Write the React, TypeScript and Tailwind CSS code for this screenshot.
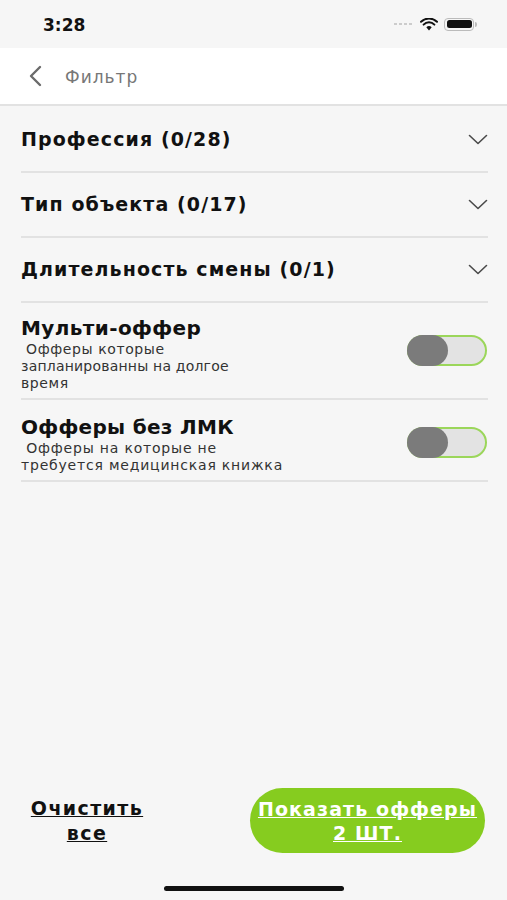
import React from "react";

const Chevron = () => (
  <svg width="20" height="12" viewBox="0 0 20 12" fill="none">
    <path d="M1.5 1.5 L10 9.5 L18.5 1.5" stroke="#4a4a4a" strokeWidth="1.6" strokeLinecap="round" strokeLinejoin="round" />
  </svg>
);

const Toggle = () => (
  <div className="relative w-[80px] h-[31px] rounded-full bg-[#e3e3e3] border-2 border-[#9bd65a] shrink-0">
    <div className="absolute left-[-2px] top-[-2px] w-[41px] h-[31px] rounded-full bg-[#7b7b7b]" />
  </div>
);

const Row = ({ title }: { title: string }) => (
  <div className="flex items-center justify-between h-[65px] border-b-2 border-[#e2e2e2]">
    <span className="text-[19px] font-bold text-[#111] tracking-[1.1px]">{title}</span>
    <Chevron />
  </div>
);

export default function App() {
  return (
    <div className="w-[507px] h-[900px] bg-[#f6f6f6] flex flex-col" style={{ fontFamily: '"DejaVu Sans", "Liberation Sans", sans-serif' }}>
      <div className="h-[48px] flex items-center justify-between pl-[43px] pr-[30px]">
        <span className="text-[17px] font-bold text-[#111] pt-[3px]">3:28</span>
        <div className="flex items-center gap-[6px]">
          <div className="flex gap-[2px] mr-[2px]">
            <div className="w-[3px] h-[2px] bg-[#ccc]" />
            <div className="w-[3px] h-[2px] bg-[#ccc]" />
            <div className="w-[3px] h-[2px] bg-[#ccc]" />
            <div className="w-[3px] h-[2px] bg-[#ccc]" />
          </div>
          <svg width="18" height="13" viewBox="0 0 18 13">
            <path d="M9 12.5 L6.3 9.3 A4 4 0 0 1 11.7 9.3 Z" fill="#111" />
            <path d="M3.6 6.6 A7.6 7.6 0 0 1 14.4 6.6" stroke="#111" strokeWidth="2" fill="none" strokeLinecap="round" />
            <path d="M1 3.8 A11.5 11.5 0 0 1 17 3.8" stroke="#111" strokeWidth="2" fill="none" strokeLinecap="round" />
          </svg>
          <div className="flex items-center">
            <div className="w-[30px] h-[13px] rounded-[4px] border border-[#bbb] p-[1.5px]">
              <div className="w-full h-full rounded-[2.5px] bg-[#111]" />
            </div>
            <div className="w-[2px] h-[5px] bg-[#bbb] rounded-r-sm ml-[1px]" />
          </div>
        </div>
      </div>
      <div className="h-[58px] bg-white border-b-2 border-[#e2e2e2] flex items-center pl-[28px]">
        <svg width="14" height="22" viewBox="0 0 14 22" fill="none">
          <path d="M12 2 L3 11 L12 20" stroke="#6b6b6b" strokeWidth="2.4" strokeLinecap="round" strokeLinejoin="round" />
        </svg>
        <span className="ml-[23px] text-[17px] text-[#777] pt-[3px] tracking-[1px]">Фильтр</span>
      </div>
      <div className="pl-[21px] pr-[19px] pt-[2px]">
        <Row title="Профессия (0/28)" />
        <Row title="Тип объекта (0/17)" />
        <Row title="Длительность смены (0/1)" />
        <div className="flex items-center justify-between border-b-2 border-[#e2e2e2] pt-[12px] pb-[6px]">
          <div className="flex flex-col">
            <span className="text-[20px] font-bold text-[#111] leading-[26px] tracking-[0.4px]">Мульти-оффер</span>
            <span className="text-[14px] text-[#333] leading-[17px] tracking-[0.6px]">&nbsp;Офферы которые</span>
            <span className="text-[14px] text-[#333] leading-[17px] tracking-[0.2px]">запланированны на долгое</span>
            <span className="text-[14px] text-[#333] leading-[17px] tracking-[0.6px]">время</span>
          </div>
          <div className="mr-[1px] mb-[6px]"><Toggle /></div>
        </div>
        <div className="flex items-center justify-between border-b-2 border-[#e2e2e2] pt-[14px] pb-[6px]">
          <div className="flex flex-col">
            <span className="text-[20px] font-bold text-[#111] leading-[26px] tracking-[0.3px]">Офферы без ЛМК</span>
            <span className="text-[14px] text-[#333] leading-[17px] tracking-[0.8px]">&nbsp;Офферы на которые не</span>
            <span className="text-[14px] text-[#333] leading-[17px] tracking-[0.8px]">требуется медицинская книжка</span>
          </div>
          <div className="mr-[1px] mt-[-4px]"><Toggle /></div>
        </div>
      </div>
      <div className="flex-1" />
      <div className="flex items-center justify-between pl-[28px] pr-[22px]">
        <button className="w-[118px] text-[19px] font-bold text-[#111] underline leading-[25px] text-center tracking-[1.4px]">Очистить<br />все</button>
        <button className="w-[235px] h-[65px] rounded-full bg-[#86cc1f] text-white text-[19px] font-bold underline leading-[24px] text-center tracking-[1.1px]">Показать офферы<br />2 ШТ.</button>
      </div>
      <div className="h-[47px] flex items-end justify-center pb-[9px]">
        <div className="w-[180px] h-[5px] rounded-full bg-[#111]" />
      </div>
    </div>
  );
}
